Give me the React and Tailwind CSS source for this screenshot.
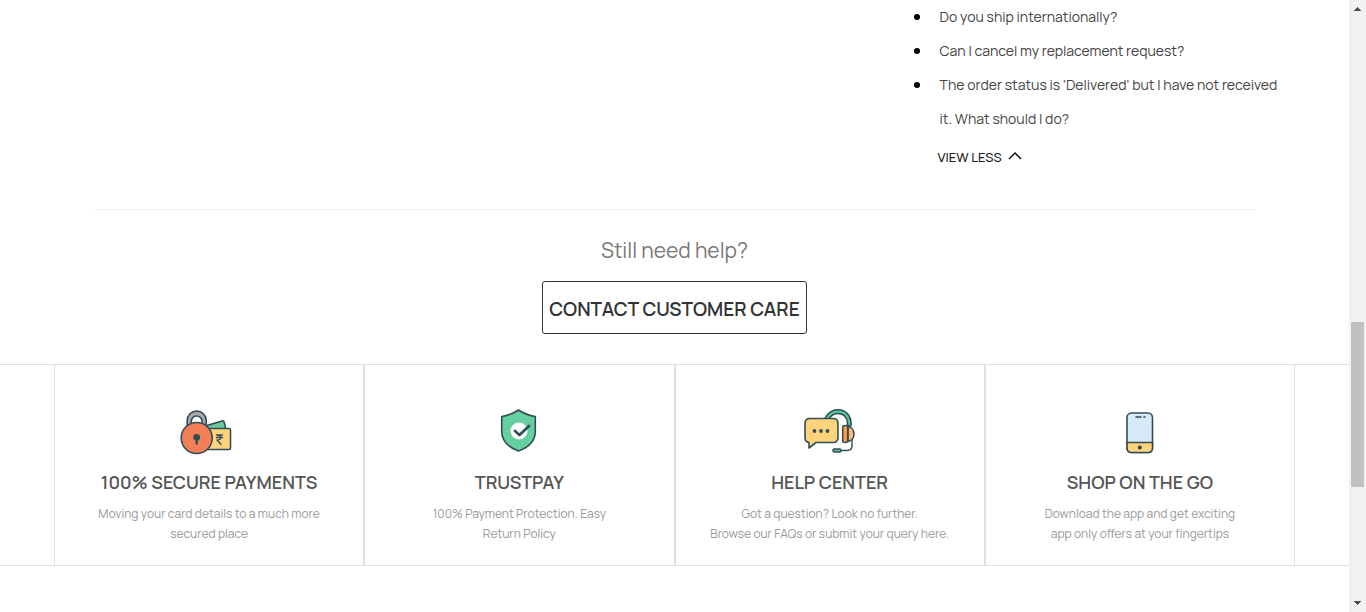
import React from 'react';

const faqs = [
  'Do you ship internationally?',
  'Can I cancel my replacement request?',
  "The order status is 'Delivered' but I have not received it. What should I do?",
];

function PaymentsIcon() {
  return (
    <svg width="58" height="48" viewBox="0 -1 58 48" fill="none" stroke="#324d58" strokeWidth="1.6" strokeLinejoin="round" strokeLinecap="round" aria-hidden="true">
      <path d="M22 18 42 12q1.800-.4 2.300 1.400L46 21H22z" fill="#6bc9a0" />
      <rect x="22" y="19.500" width="28.500" height="21" rx="1.500" fill="#ffd37c" />
      <path d="M36.500 26h6M36.500 28.500h6M37 26c5 0 5 5 0 5l4 4.500" strokeWidth="1.300" />
      <path d="M7.200 18v-6.500a9.500 9.500 0 0 1 19 0V18h-4v-5.500a5.500 5.500 0 0 0-11 0V18z" fill="#a7a9ac" />
      <circle cx="16.700" cy="29" r="15.500" fill="#f27f56" />
      <circle cx="16.700" cy="28.300" r="3.400" fill="#324d58" stroke="none" />
      <path d="M16.700 29v5.500" strokeWidth="2.400" />
    </svg>
  );
}

function ShieldIcon() {
  return (
    <svg width="38" height="46" viewBox="0 1 38 46" fill="none" stroke="#324d58" strokeWidth="1.600" strokeLinejoin="round" strokeLinecap="round" aria-hidden="true">
      <path d="M18.500 2C14 5 8 7.500 1.700 8.500V23c0 10 7 16.500 16.800 20 9.800-3.500 16.800-10 16.800-20V8.500C29 7.500 23 5 18.500 2z" fill="#66cfa2" />
      <circle cx="19" cy="23" r="8.500" fill="#fff" stroke="none" />
      <path d="m15 23 4.500 4L29 18" strokeWidth="2.800" />
    </svg>
  );
}

function HelpIcon() {
  return (
    <svg width="52" height="48" viewBox="0 0 52 48" fill="none" stroke="#324d58" strokeWidth="1.600" strokeLinejoin="round" strokeLinecap="round" aria-hidden="true">
      <path d="M20.500 11C23.500 5 28.500 1.800 34 1.800c8 0 13 6 13 13.700V18h-3.500v-2.500c0-6-3.700-10-9.500-10-4 0-7 2-9 5.500z" fill="#55c996" />
      <path d="M44 18.500c3.500 .5 6 3.500 6 7.500s-2.500 7-6 7.500z" fill="#ffb87a" />
      <rect x="38.700" y="17.500" width="5" height="17" rx="2" fill="#ff9d3f" />
      <path d="M48 31.500V38q0 4.500-5 4.500h-6" strokeWidth="1.400" />
      <rect x="29" y="41" width="8" height="3" rx="1.500" fill="#55c996" />
      <path d="M6 10.500h23q5 0 5 5v14q0 5-5 5H12l-7 5.500v-5.500q-4-.5-4-5v-14q0-5 5-5z" fill="#ffd37c" />
      <g fill="#324d58" stroke="none">
        <circle cx="10.500" cy="23" r="1.900" /><circle cx="17" cy="23" r="1.900" /><circle cx="23.500" cy="23" r="1.900" />
      </g>
    </svg>
  );
}

function PhoneIcon() {
  return (
    <svg width="28" height="44" viewBox="0 -2 28 44" fill="none" stroke="#324d58" strokeWidth="1.600" strokeLinecap="round" aria-hidden="true">
      <rect x="1" y="1" width="25.500" height="39.500" rx="4.500" fill="#d6ebf7" />
      <path d="M1 30.500h25.500V36q0 4.500-4.500 4.500H5.500Q1 40.500 1 36z" fill="#ffd37c" />
      <path d="M10 5h5M18 5h1" strokeWidth="1.500" />
      <circle cx="13.800" cy="35.500" r="2.100" fill="#324d58" stroke="none" />
    </svg>
  );
}

const features = [
  { Icon: PaymentsIcon, title: '100% SECURE PAYMENTS', lines: ['Moving your card details to a much more', 'secured place'] },
  { Icon: ShieldIcon, title: 'TRUSTPAY', lines: ['100% Payment Protection. Easy', 'Return Policy'] },
  { Icon: HelpIcon, title: 'HELP CENTER', lines: ['Got a question? Look no further.', 'Browse our FAQs or submit your query here.'] },
  { Icon: PhoneIcon, title: 'SHOP ON THE GO', lines: ['Download the app and get exciting', 'app only offers at your fingertips'] },
];

function Scrollbar() {
  return (
    <div className="flex w-[17px] shrink-0 flex-col items-center bg-[#f1f1f1]" aria-hidden="true">
      <svg width="17" height="17" viewBox="0 0 17 17" fill="#505050" shapeRendering="crispEdges"><path d="M5 11h7L8.500 7z" /></svg>
      <div className="grow-[305]" />
      <div className="w-[13px] grow-[165] bg-[#c1c1c1]" />
      <div className="grow-[108]" />
      <svg width="17" height="17" viewBox="0 0 17 17" fill="#505050" shapeRendering="crispEdges"><path d="M5 6h7L8.500 10z" /></svg>
    </div>
  );
}

export default function App() {
  return (
    <div className="flex min-h-screen bg-white font-['Manrope','Inter',sans-serif]">
      <main className="min-w-0 flex-1">
        <section className="flex justify-end pr-[5%]">
          <div className="w-[368px]">
            <ul className="list-none text-[14px] leading-[34px] font-normal text-[#444]">
              {faqs.map((q) => (
                <li key={q} className="flex gap-5">
                  <span className="mt-[14px] size-1.5 shrink-0 rounded-full bg-black" />
                  <a href="#faq">{q}</a>
                </li>
              ))}
            </ul>
            <button type="button" className="mt-[11px] ml-6 flex items-center gap-1.5 text-[13px] leading-5 font-medium text-[#222]">
              VIEW LESS
              <svg width="14" height="12" viewBox="0 0 14 12" fill="none" stroke="#000" strokeWidth="1.400" aria-hidden="true"><path d="M1 8l6-6 6 6" /></svg>
            </button>
          </div>
        </section>
        <hr className="mx-[7%] mt-[42px] border-[#eee]" />
        <section className="flex flex-col items-center pt-6 pb-[30px]">
          <h2 className="text-[21px] leading-8 font-normal text-[#777]">Still need help?</h2>
          <button type="button" className="mt-[15px] h-[53px] rounded-[3px] border border-[#333] px-1.5 pt-1 text-[19px] font-semibold text-[#333]">
            CONTACT CUSTOMER CARE
          </button>
        </section>
        <section className="border-y border-[#e0e0e0] px-[4%]">
          <div className="grid grid-cols-4">
            {features.map(({ Icon, title, lines }) => (
              <article key={title} className="flex flex-col items-center border-x border-[#e0e0e0] pt-10 pb-[21px] text-center">
                <div className="flex h-[54px] items-center"><Icon /></div>
                <h3 className="mt-[11px] text-[18px] leading-6 font-semibold text-[#555]">{title}</h3>
                <p className="mt-[10px] text-[12px] leading-5 font-normal text-[#999]">
                  {lines[0]}<br />{lines[1]}
                </p>
              </article>
            ))}
          </div>
        </section>
      </main>
      <Scrollbar />
    </div>
  );
}
